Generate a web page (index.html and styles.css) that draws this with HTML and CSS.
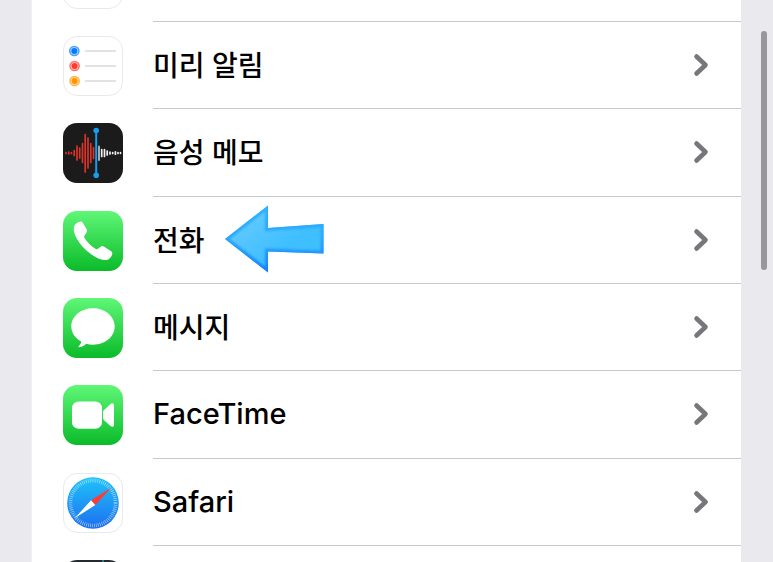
FILE: index.html
```html
<!DOCTYPE html>
<html lang="ko">
<head>
<meta charset="utf-8">
<meta name="viewport" content="width=device-width, initial-scale=1">
<title>설정</title>
<link rel="stylesheet" href="styles.css">
</head>
<body>
<svg class="defs" width="0" height="0" aria-hidden="true">
  <defs>
    <linearGradient id="green" x1="0" y1="0" x2="0" y2="1"><stop offset="0" stop-color="#5ff777"/><stop offset="1" stop-color="#0abb29"/></linearGradient>
    <linearGradient id="sky" x1="0" y1="0" x2="0" y2="1"><stop offset="0" stop-color="#1fc3fa"/><stop offset="1" stop-color="#1d6ff0"/></linearGradient>
    <linearGradient id="arrow-fill" x1="0" y1="0" x2="1" y2="1"><stop offset="0.1" stop-color="#6accff"/><stop offset="0.6" stop-color="#40bfff"/></linearGradient>
    <linearGradient id="arrow-edge" x1="0" y1="0" x2="0" y2="1"><stop offset="0" stop-color="#2db2ff"/><stop offset="0.45" stop-color="#2ba8fd"/><stop offset="1" stop-color="#1480ff"/></linearGradient>
    <filter id="soft" x="-10%" y="-10%" width="120%" height="120%"><feGaussianBlur stdDeviation="1.200"/></filter>
    <clipPath id="arrow-clip"><path d="M1 34 44 0.5V23L99.500 19V48.500L44 46.500V67.500Z"/></clipPath>
    <symbol id="chevron" viewBox="0 0 16 24"><path d="M3.500 3.500 12.500 12 3.500 20.500" fill="none" stroke="#77777b" stroke-width="4.600" stroke-linecap="round" stroke-linejoin="round"/></symbol>
  </defs>
</svg>
<main class="panel">
  <ul class="list">
    <li class="row row-first">
      <svg class="icon" viewBox="0 0 60 60" aria-hidden="true"><rect x="0.5" y="0.5" width="59" height="59" rx="13.500" fill="#fff" stroke="#e9e9eb"/></svg>
      <div class="body"></div>
    </li>
    <li class="row">
      <svg class="icon" viewBox="0 0 60 60" aria-hidden="true">
        <rect x="0.5" y="0.5" width="59" height="59" rx="13.500" fill="#fff" stroke="#e9e9eb"/>
        <g stroke="#e2e2e4" stroke-width="1.800"><path d="M22 15H53M22 30H53M22 45H53"/></g>
        <g stroke-width="1.500">
          <circle cx="11.300" cy="15" r="4.600" fill="#b5d8ff" stroke="#4ba1ff"/><circle cx="11.300" cy="15" r="3" fill="#007aff"/>
          <circle cx="11.600" cy="30" r="4.600" fill="#ffc4c0" stroke="#ff756e"/><circle cx="11.600" cy="30" r="3" fill="#ff3b30"/>
          <circle cx="11.600" cy="45" r="4.600" fill="#ffdfa8" stroke="#ffb54a"/><circle cx="11.600" cy="45" r="3" fill="#ff9500"/>
        </g>
      </svg>
      <a class="body" href="#reminders"><span class="label">미리 알림</span><svg class="chevron" aria-hidden="true"><use href="#chevron"/></svg></a>
    </li>
    <li class="row">
      <svg class="icon" viewBox="0 0 60 60" aria-hidden="true">
        <rect width="60" height="60" rx="14" fill="#1b1b1b"/>
        <g stroke-width="1.700" stroke-linecap="round">
          <path d="M3 29.500V30.500M5.700 29V31M8.400 29.500V30.500M11.200 27.500V32.500M14 23V37M16.700 25V35M19.500 20.500V39.500M22.200 11.500V49M25 15V45M27.800 20.500V39.500M30.500 24.500V35.500" stroke="#dc3328"/>
          <path d="M36 23.500V37" stroke="#aaa" stroke-width="2"/>
          <path d="M38.700 26.500V33.500M41.500 26.500V33.500M44.200 28V32M47 29V31M49.700 29.500V30.500M52.400 28.800V31.200M55 29.500V30.500M57.500 29.700V30.300" stroke="#f2f2f2"/>
        </g>
        <path d="M33.200 8V52" stroke="#169dee" stroke-width="2"/>
        <circle cx="33.200" cy="7.500" r="2.800" fill="#169dee"/><circle cx="33.200" cy="52.300" r="2.800" fill="#169dee"/>
      </svg>
      <a class="body" href="#voice-memos"><span class="label">음성 메모</span><svg class="chevron" aria-hidden="true"><use href="#chevron"/></svg></a>
    </li>
    <li class="row">
      <svg class="icon" viewBox="0 0 60 60" aria-hidden="true">
        <rect width="60" height="60" rx="14" fill="url(#green)"/>
        <path d="M11.500 14.500C12.700 12.500 15.500 10.700 17.600 10.500C18.600 10.400 19.400 11 20.100 12.200L23.600 18.200C24.400 19.600 24.200 20.600 23.200 22L21.500 24.500C20.900 25.500 21 26.200 21.800 27.400C24.200 31 28.200 35 32 37.500C33.200 38.300 34.100 38.300 35 37.700L37.500 35.800C38.800 34.900 39.800 34.900 41.200 35.700L47.800 40C49.200 40.900 49.500 41.900 49.200 43.200C48.600 45.600 46.500 48.500 43.800 49C40 49.600 34.500 47.700 28.500 43.500C21.500 38.600 15.500 31.800 12.500 25C10.700 20.800 10.200 16.800 11.500 14.500Z" fill="#fff"/>
      </svg>
      <a class="body" href="#phone"><span class="label">전화</span>
        <svg class="pointer" viewBox="0 0 100 68" aria-hidden="true">
          <g clip-path="url(#arrow-clip)">
            <rect width="100" height="68" fill="url(#arrow-fill)"/>
            <path d="M1 34 44 0.5V23L99.500 19V48.500L44 46.500V67.500Z" fill="none" stroke="url(#arrow-edge)" stroke-width="6" filter="url(#soft)"/>
          </g>
        </svg>
        <svg class="chevron" aria-hidden="true"><use href="#chevron"/></svg></a>
    </li>
    <li class="row">
      <svg class="icon" viewBox="0 0 60 60" aria-hidden="true">
        <rect width="60" height="60" rx="14" fill="url(#green)"/>
        <path d="M30 10.300C42 10.300 51.700 18.300 51.700 28.500C51.700 38.700 42 46.700 30 46.700C27.600 46.700 25.300 46.400 23.200 45.800C21 47.800 18.500 49.200 15.800 49.300C15.300 49.300 15.200 48.900 15.500 48.500C17.300 46.600 18.200 44.800 18.300 43.600C12.300 40.300 8.300 34.800 8.300 28.500C8.300 18.300 18 10.300 30 10.300Z" fill="#fff"/>
      </svg>
      <a class="body" href="#messages"><span class="label">메시지</span><svg class="chevron" aria-hidden="true"><use href="#chevron"/></svg></a>
    </li>
    <li class="row">
      <svg class="icon" viewBox="0 0 60 60" aria-hidden="true">
        <rect width="60" height="60" rx="14" fill="url(#green)"/>
        <rect x="9" y="16.500" width="30" height="27.200" rx="6.500" fill="#fff"/>
        <path d="M40 27.500C40 26.300 40.400 25.500 41.300 24.700L47.500 19C49.200 17.500 51 18.200 51 20.300V39.700C51 41.800 49.200 42.500 47.500 41L41.300 35.400C40.400 34.600 40 33.800 40 32.600Z" fill="#fff"/>
      </svg>
      <a class="body" href="#facetime"><span class="label label-latin">FaceTime</span><svg class="chevron" aria-hidden="true"><use href="#chevron"/></svg></a>
    </li>
    <li class="row">
      <svg class="icon" viewBox="0 0 60 60" aria-hidden="true">
        <rect x="0.5" y="0.5" width="59" height="59" rx="13.500" fill="#fff" stroke="#e9e9eb"/>
        <circle cx="30" cy="30" r="25.800" fill="url(#sky)"/>
        <circle cx="30" cy="30" r="22.500" fill="none" stroke="#fff" stroke-opacity="0.6" stroke-width="3.600" stroke-dasharray="0.700 1.263"/>
        <path d="M48.300 14.800 28 27.300 32.300 32Z" fill="#ff3b30"/>
        <path d="M11.700 45.200 28 27.300 32.300 32Z" fill="#fff"/>
      </svg>
      <a class="body" href="#safari"><span class="label label-latin">Safari</span><svg class="chevron" aria-hidden="true"><use href="#chevron"/></svg></a>
    </li>
    <li class="row row-last">
      <svg class="icon" viewBox="0 0 60 60" aria-hidden="true">
        <rect width="60" height="60" rx="14" fill="#242a2d"/><path d="M40 0V4" stroke="#36c6d8" stroke-width="1"/>
      </svg>
      <div class="body"></div>
    </li>
  </ul>
</main>
<div class="scroll-thumb"></div>
</body>
</html>
```
FILE: styles.css
```css
* { box-sizing: border-box; }

body {
  margin: 0;
  background: #eae9ee;
  color: #000;
  font-family: Inter, "Noto Sans CJK KR", sans-serif;
}

.defs { position: absolute; }

.panel {
  margin: 0 32px 0 31px;
  background: #fff;
  border-left: 1px solid #f1f0f4;
}

.list {
  display: grid;
  grid-template-rows: 22px repeat(6, minmax(87px, 1fr)) 16px;
  height: 100vh;
  min-height: 560px;
  margin: 0;
  padding: 0;
  list-style: none;
  overflow: hidden;
}

.row {
  display: flex;
  align-items: center;
  gap: 30px;
  padding-left: 31px;
  min-height: 0;
}

.icon {
  flex: none;
  width: 60px;
  height: 60px;
  margin-top: 1px;
}

.body {
  flex: 1;
  align-self: stretch;
  display: flex;
  align-items: center;
  padding-right: 32px;
  border-bottom: 1px solid #c8c8ca;
  color: inherit;
  text-decoration: none;
}

.label {
  padding-top: 2px;
  font-size: 28px;
  line-height: 40px;
  font-weight: 500;
}

.label-latin {
  padding-top: 0;
  font-size: 29px;
}

.pointer {
  flex: none;
  width: 100px;
  height: 68px;
  margin: 0 0 2px 19px;
}

.chevron {
  flex: none;
  width: 16px;
  height: 24px;
  margin-left: auto;
}

.row-first {
  align-items: flex-end;
  overflow: hidden;
}

.row-first .icon { margin-bottom: 13px; }

.row-last {
  align-items: flex-start;
  overflow: hidden;
}

.row-last .icon { margin-top: 14px; }
.row-last .body { border-bottom: 0; }

/* Overlay scroll indicator */
.scroll-thumb {
  position: fixed;
  top: 31px;
  right: 6px;
  width: 6px;
  height: 239px;
  border-radius: 3px;
  background: #98989a;
}
```
